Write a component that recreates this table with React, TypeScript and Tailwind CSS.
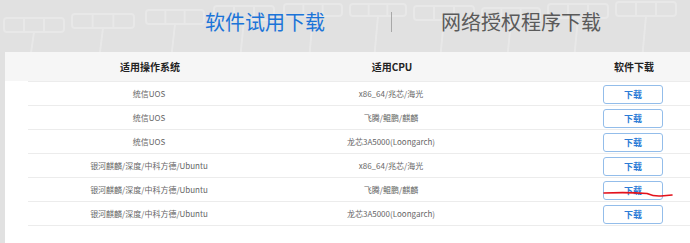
import React from "react";

const rows = [
  { os: "统信UOS", cpu: "x86_64/兆芯/海光" },
  { os: "统信UOS", cpu: "飞腾/鲲鹏/麒麟" },
  { os: "统信UOS", cpu: "龙芯3A5000(Loongarch)" },
  { os: "银河麒麟/深度/中科方德/Ubuntu", cpu: "x86_64/兆芯/海光" },
  { os: "银河麒麟/深度/中科方德/Ubuntu", cpu: "飞腾/鲲鹏/麒麟" },
  { os: "银河麒麟/深度/中科方德/Ubuntu", cpu: "龙芯3A5000(Loongarch)" },
];

const font = "font-['Noto_Sans_CJK_SC','Noto_Sans',sans-serif]";

// faint server-rack texture behind the tabs
function Texture() {
  const boxes = [
    [4, 18, 60, 14], [72, 14, 62, 14], [146, 10, 58, 14], [214, 6, 60, 14],
    [284, 4, 58, 12], [350, 4, 56, 12], [414, 6, 60, 14], [482, 8, 58, 14],
    [548, 4, 60, 14], [616, 2, 60, 14],
  ];
  return (
    <svg className="absolute inset-0" width="690" height="60" viewBox="0 0 690 60">
      {boxes.map(([x, y, w, h], i) => (
        <g key={i} fill="none" stroke="#ededed" strokeWidth="2" opacity="0.6">
          <rect x={x} y={y} width={w} height={h} rx="3" />
          <line x1={x + w / 3} y1={y} x2={x + w / 3} y2={y + h} />
          <line x1={x + (2 * w) / 3} y1={y} x2={x + (2 * w) / 3} y2={y + h} />
          <line x1={x + w / 2} y1={y + h} x2={x + w / 2 - 4} y2={60} />
        </g>
      ))}
    </svg>
  );
}

export default function App() {
  return (
    <div className={`relative w-[690px] h-[243px] overflow-hidden bg-[#e1e1e1] ${font}`}>
      <Texture />

      {/* Tabs */}
      <div className="relative flex items-start h-[52px] pt-[12px] pl-[205px]">
        <span className="text-[20px] leading-[20px] text-[#1b74d8]">软件试用下载</span>
        <span className="ml-[66px] w-px h-[20px] bg-[#a8a8a8]"></span>
        <span className="ml-[49px] text-[20px] leading-[20px] text-[#5a5a5a]">网络授权程序下载</span>
      </div>

      {/* Panel */}
      <div className="relative ml-[5px] w-[760px] h-[200px] bg-white">
        <div className="grid grid-cols-[242px_242px_242px] pl-[24px] h-[29px] bg-[#f6f6f6] items-center text-[10px] font-bold text-[#222]">
          <div className="text-center">适用操作系统</div>
          <div className="text-center">适用CPU</div>
          <div className="text-center">软件下载</div>
        </div>
        <div className="ml-[23px] w-[726px]">
          {rows.map((r, i) => (
            <div
              key={i}
              className="grid grid-cols-[242px_242px_242px] h-[24px] items-center border-t border-[#ececec] text-[8px] text-[#666]"
            >
              <div className="text-center">{r.os}</div>
              <div className="text-center">{r.cpu}</div>
              <div className="flex justify-center pt-[1px]">
                <button className="w-[60px] h-[19px] rounded-[3px] border border-[#93bdea] bg-white text-[9px] font-bold text-[#2b7bd6] leading-none">
                  下载
                </button>
              </div>
            </div>
          ))}
          <div className="border-t border-[#ececec]"></div>
        </div>
      </div>

      {/* red annotation */}
      <svg className="absolute left-0 top-0 pointer-events-none" width="690" height="243">
        <path
          d="M604 193 Q628 192 647 193.5 Q654 196.5 661 196 L672 195"
          fill="none"
          stroke="#e3111b"
          strokeWidth="1.6"
          strokeLinecap="round"
        />
      </svg>
    </div>
  );
}
